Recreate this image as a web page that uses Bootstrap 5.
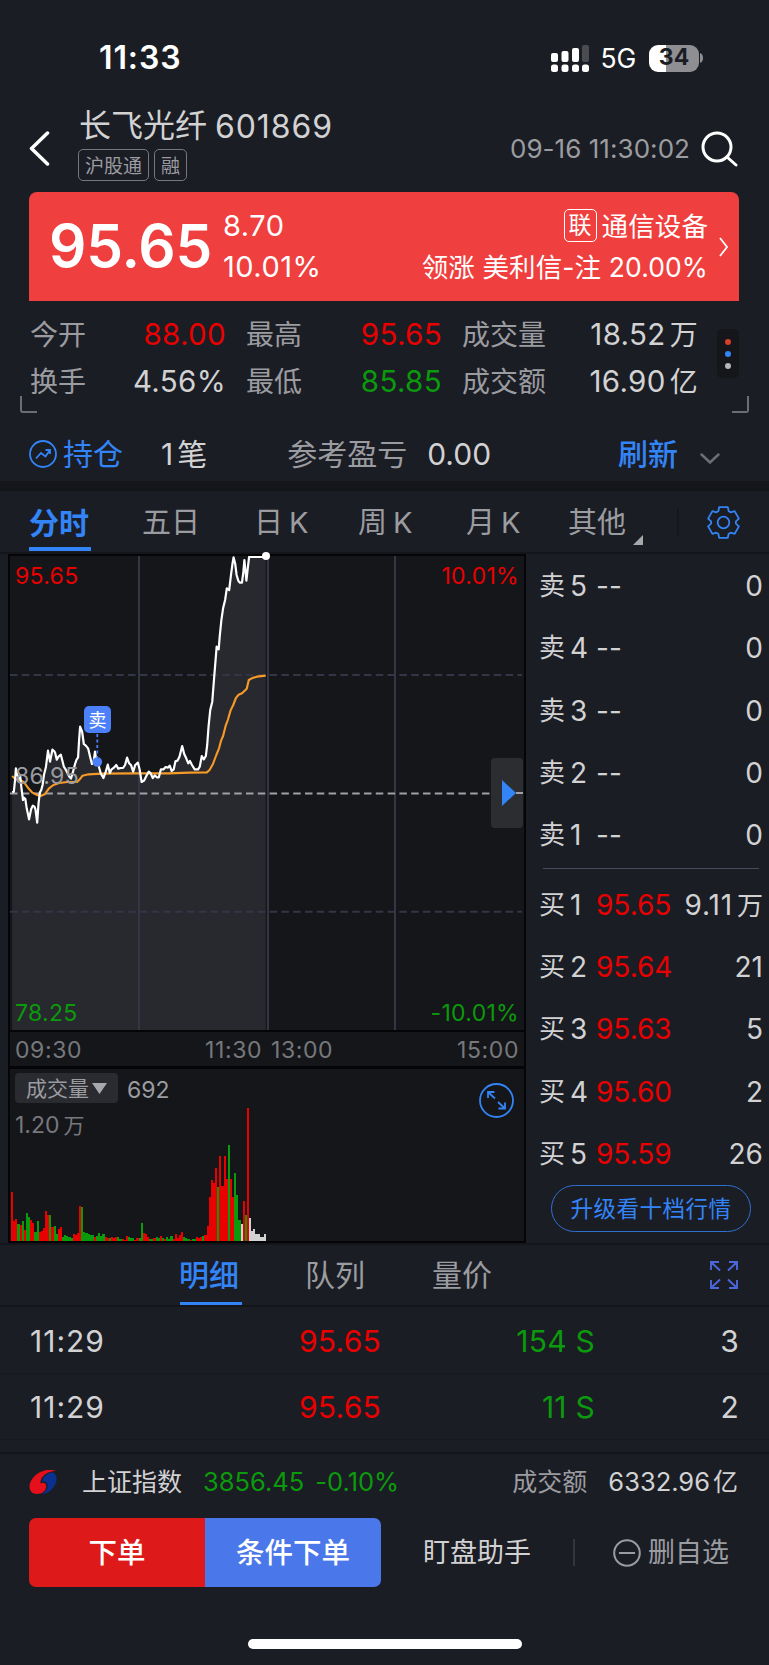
<!DOCTYPE html>
<html lang="zh-CN">
<head>
<meta charset="utf-8">
<meta name="viewport" content="width=device-width, initial-scale=1">
<title>长飞光纤 601869</title>
<link href="https://cdn.jsdelivr.net/npm/bootstrap@5.3.0/dist/css/bootstrap.min.css" rel="stylesheet">
<style>
:root{--bg:#1b1d25;--line:#14151a;--up:#e90000;--down:#0b9a0b;--blue:#3384f6;--txt:#d2d2d3;--dim:#9b9ca0}
body{background:var(--bg);color:var(--txt);font-family:Inter,"Noto Sans CJK SC",sans-serif;line-height:1;width:769px;height:1665px;overflow:hidden;font-feature-settings:"calt" 0}
svg{display:block;flex:none}
span,button,a{white-space:nowrap}
.up{color:var(--up)}.down{color:var(--down)}.blue{color:var(--blue)}.dim{color:var(--dim)}
.gut{padding-left:29px;padding-right:30px}
.status-bar{height:100px;padding:16px 66px 0 99px}
.clock{font-size:32px;font-weight:600;letter-spacing:.9px;color:#fff}
.net{font-size:26.5px;font-weight:400;margin-left:12px;letter-spacing:-.2px}
.battery{width:50px;height:27px;border-radius:9px;margin-left:13px;background:linear-gradient(90deg,#fff 35%,#8e8e93 35%);color:#1b1d25;font-size:23px;font-weight:700;padding-bottom:1px}
.head{height:92px}
.stock-name{font-size:32px;height:44px}
.tag{border:1.5px solid #77787c;border-radius:5px;height:32px;font-size:19px;color:var(--dim);padding:2px 6px 0}
.stamp{font-size:26px;color:var(--dim);letter-spacing:.05px}
.quote{margin:0 30px 0 29px;height:109px;background:#ef3f3e;border-radius:8px 8px 0 0;color:#fff;padding:0 10px 0 20px}
.last{font-size:58.5px;font-weight:600;width:174px;letter-spacing:-.2px}
.chg{font-size:29px;gap:12px;letter-spacing:.5px;margin-top:-2px}
.sector{gap:12px;font-size:26.5px;margin-right:11px;margin-top:-3px;letter-spacing:.1px}
.sector .lian{border:1.5px solid #fff;border-radius:5px;width:33px;height:33px;font-size:23px;margin-right:5px}
.stats{height:111px;padding:11px 30px 0 30px}
.stat-grid{display:grid;grid-template-columns:56px 140px 76px 140px 104px 152px;grid-template-rows:46px 47px;align-items:center;width:668px;height:93px}
.stat-grid .k{font-size:28px;color:var(--dim)}
.stat-grid .v{font-size:29.5px;text-align:right;letter-spacing:.35px}
.k2{padding-left:20px}
.cn{font-size:28px}
.more{width:22px;height:49px;background:#15161a;border-radius:5px;gap:6px;margin-top:17px}
.more i{width:6px;height:6px;border-radius:50%}
.corner{width:17px;height:17px;border:solid #6d6e72;border-width:0 0 2px 2px;border-radius:0 0 0 3px;top:396px;left:20px}
.corner.r{left:732px;border-width:0 2px 2px 0;border-radius:0 0 3px 0}
.hold{height:69px;font-size:30px;padding-top:15px;padding-bottom:0}
.hold span{flex:none}
.band{height:10px;background:#15161a;margin-top:0}
.ktabs{height:63px;font-size:29px;color:var(--dim);border-bottom:2px solid var(--line);display:grid;grid-template-columns:113px 112px 104px 108px 102px 109px 30px 30px;align-items:center}
.ktabs>*{height:61px;display:flex;align-items:center;position:relative;padding-top:2px}
.ktabs i{font-style:normal;margin-left:6px}
.on{color:var(--blue)}
.on::after{content:"";position:absolute;left:0;bottom:1px;width:62px;height:4px;background:var(--blue)}
.main{height:689px}
.chart-box{width:518px;margin-left:8px;background:#15161a;border:2px solid #050507;border-top-width:2px}
.plot{height:476px;border-bottom:2px solid #050507;font-size:23px}
.plot span{position:absolute;letter-spacing:.3px}
.axis{height:37px;border-bottom:3px solid #050507;font-size:23px;letter-spacing:.6px;color:#77787c;padding:2px 5px 0;display:grid;grid-template-columns:190px 66px 1fr auto;align-items:center}
.vol{height:172px;color:#77787c;font-size:23px}
.vsel{background:#292b30;border-radius:4px;width:103px;height:30px;color:var(--dim);font-size:21px;gap:3px}
.vtop{padding:4px 0 0 5px}
.bars{left:1px;bottom:0;height:134px;width:256px}
.bars i{width:2.13px;flex:none}
.play{left:481px;top:202px;width:32px;height:70px;border-radius:4px;background:#2c2d31}
.sellmark{left:74px;top:150px;width:27px;height:27px;border-radius:5px;background:#4b80fa;color:#fff;font-size:18px;padding-top:2px}
.book{width:243px;padding:1px 0 0 13px}
.lv{height:62.3px;display:grid;grid-template-columns:31px 26px 80px 1fr;align-items:center;font-size:28px;padding-right:6px}
.lv b{font-weight:400;font-size:26px}
.lv span:last-child{text-align:right;justify-self:end}
.sep{height:1px;background:#494b5a;margin:2px 10px 4px 4px}
.deep{width:200px;height:47px;margin:0 0 0 12px;border:1.5px solid #2f6fd0;border-radius:24px;color:var(--blue);font-size:22.5px;letter-spacing:.5px;background:none;padding:2px 0 0}
.dtabs{height:64px;border-bottom:2px solid var(--line);border-top:2px solid var(--line);font-size:30px;color:var(--dim);display:grid;grid-template-columns:150px 126px 127px 1fr auto;align-items:center;padding-right:31px}
.dtabs>*{height:60px;display:flex;align-items:center;position:relative}
.dtabs .on::after{bottom:0;height:3px;left:1px}
.tick{height:66.5px;border-bottom:1px solid #17181e;font-size:30px;letter-spacing:.25px;padding-top:2px;display:grid;grid-template-columns:170px 182px 214px 1fr;align-items:center;text-align:right}
.tick .text-start{letter-spacing:1px;padding-left:1px}
.index-row{height:60px;border-top:2px solid var(--line);font-size:25.5px;padding-bottom:2px}
.acts{padding-top:6px;height:75px}
.order{width:176px;height:69px;border:0;border-radius:7px 0 0 7px;background:#dd1a19;color:#fff;font-size:28.5px;font-weight:500;padding:2px 0 0}
.order.cond{background:#4a77e9;border-radius:0 7px 7px 0}
.home-bar{width:274px;height:10px;border-radius:5px;background:#fff;margin:52px auto 0 248px}
</style>
</head>
<body class="position-relative">
<header class="status-bar d-flex align-items-center">
  <span class="clock me-auto">11:33</span>
  <svg width="38" height="27" fill="#fff"><rect y="8" width="7" height="9" rx="2"/><rect x="10.5" y="6" width="7" height="11" rx="2"/><rect x="21" y="3" width="7" height="14" rx="2"/><rect x="31" width="7" height="17" rx="2" fill="#4b4c51"/><rect y="19.500" width="7" height="7.500" rx="2.500"/><rect x="10.500" y="19.500" width="7" height="7.500" rx="2.500"/><rect x="21" y="19.500" width="7" height="7.500" rx="2.500"/><rect x="31" y="19.500" width="7" height="7.500" rx="2.500"/></svg>
  <span class="net text-white">5G</span>
  <span class="battery d-flex align-items-center justify-content-center">34</span>
  <svg width="4" height="10" class="ms-0"><path d="M1 0Q4 1 4 5T1 10Z" fill="#8e8e93"/></svg>
</header>

<section class="head gut d-flex">
  <svg width="21" height="35" style="margin-top:31px" fill="none" stroke="#fff" stroke-width="3.500" stroke-linecap="round" stroke-linejoin="round"><path d="M18.500 2 2.500 17.500 18.500 33"/></svg>
  <div style="margin-left:29px;padding-top:4px">
    <div class="stock-name d-flex align-items-center"><span>长飞光纤</span><span style="margin-left:8px;letter-spacing:.9px;padding-top:2px">601869</span></div>
    <div class="d-flex" style="gap:5px;margin-top:1px;margin-left:-1px"><span class="tag d-flex align-items-center">沪股通</span><span class="tag d-flex align-items-center">融</span></div>
  </div>
  <div class="ms-auto d-flex align-items-center" style="height:98px"><span class="stamp">09-16 11:30:02</span>
    <svg width="37" height="36" style="margin:0 1px 0 11px" fill="none" stroke="#fff" stroke-width="3" stroke-linecap="round"><circle cx="16" cy="16" r="14"/><path d="M26 26 35 34"/></svg></div>
</section>

<section class="quote d-flex align-items-center">
  <span class="last">95.65</span>
  <div class="chg d-flex flex-column"><span>8.70</span><span>10.01%</span></div>
  <div class="sector d-flex flex-column align-items-end ms-auto">
    <div class="d-flex align-items-center"><span class="lian d-flex align-items-center justify-content-center">联</span>通信设备</div>
    <span>领涨 美利信-注 20.00%</span>
  </div>
  <svg width="9" height="20" fill="none" stroke="#fff" stroke-width="1.800" style="margin-right:1px"><path d="M1 1 8 10 1 19"/></svg>
</section>

<section class="stats d-flex">
  <div class="stat-grid">
    <span class="k">今开</span><span class="v up">88.00</span><span class="k k2">最高</span><span class="v up">95.65</span><span class="k k2">成交量</span><span class="v">18.52<span class="cn ms-1">万</span></span>
    <span class="k">换手</span><span class="v">4.56%</span><span class="k k2">最低</span><span class="v down">85.85</span><span class="k k2">成交额</span><span class="v">16.90<span class="cn ms-1">亿</span></span>
  </div>
  <div class="more d-flex flex-column align-items-center justify-content-center ms-auto"><i style="background:#d5402b"></i><i style="background:#3384f6"></i><i style="background:#b5b5b8"></i></div>
</section>
<i class="corner position-absolute"></i><i class="corner r position-absolute"></i>

<section class="hold gut d-flex align-items-center">
  <svg width="28" height="28" fill="none" stroke="#3384f6" stroke-width="1.800"><circle cx="14" cy="14" r="13"/><path d="M7 18.500 12 13l4.500 3.500L21 10M16.500 10h4.500v4"/></svg>
  <span class="blue" style="margin-left:6px">持仓</span>
  <span style="margin-left:38px">1</span><span style="margin-left:4px">笔</span>
  <span class="dim" style="margin-left:80px">参考盈亏</span>
  <span style="margin-left:20px">0.00</span>
  <span class="blue ms-auto fw-medium">刷新</span>
  <svg width="20" height="11" style="margin:8px 19px 0 22px" fill="none" stroke="#6d6e72" stroke-width="2.500" stroke-linecap="round"><path d="M1.500 1.500 10 9.500 18.500 1.500"/></svg>
</section>
<div class="band"></div>

<nav class="ktabs gut">
  <span class="on fw-bold" style="font-size:30px">分时</span><span>五日</span><span>日<i>K</i></span><span>周<i>K</i></span><span>月<i>K</i></span>
  <span>其他<svg width="10" height="10" style="margin:34px 0 0 7px"><path d="M10 0V10H0Z" fill="#a7a8ab"/></svg></span>
  <span><svg width="2" height="27"><path d="M1 0V27" stroke="#15161a" stroke-width="2"/></svg></span>
  <span><svg width="33" height="33" viewBox="-16.500 -16.500 33 33" fill="none" stroke="#3384f6" stroke-width="1.800" stroke-linejoin="round"><circle r="5.800"/><path d="M-5.200-11.300-4.300-15.300H4.300L5.200-11.300 7.200-10.200 11.100-11.400 15.400-3.900 12.400-1.200V1.200L15.400 3.900 11.100 11.400 7.200 10.200 5.200 11.300 4.300 15.300H-4.300L-5.200 11.300-7.200 10.200-11.100 11.400-15.400 3.900-12.400 1.200V-1.200L-15.400-3.900-11.100-11.400-7.200-10.200Z"/></svg></span>
</nav>

<section class="main d-flex">
  <div class="chart-box">
    <div class="plot position-relative">
      <svg width="514" height="474" viewBox="10 556 514 474">
        <g transform="translate(0 540) scale(.338 .33333)" fill="none" stroke-linejoin="round">
          <path id="fillArea" fill="#28292e"/>
        </g>
        <path d="M139 556V1030M268 556V1030M395 556V1030" stroke="#353645" stroke-width="2"/>
        <path d="M10 675H522M10 911.700H522" stroke="#353645" stroke-width="2" stroke-dasharray="7.500 4.300"/>
        <path d="M10 793.500H522" stroke="#a0a0a5" stroke-width="2" stroke-dasharray="7.500 4.300"/>
        <g transform="translate(0 540) scale(.338 .33333)" fill="none" stroke-linejoin="round">
          <polyline vector-effect="non-scaling-stroke" stroke="#f79a28" stroke-width="2.100" points="36,708 46,718 60,720 72,728 84,745 96,758 110,765 120,768 132,763 145,745 158,735 175,729 200,726 228,726 236,718 244,707 262,703 300,701 400,700 500,700 560,698 612,697 620,690 630,672 640,645 648,625 654,602 660,588 668,556 674,540 682,512 690,495 698,474 706,464 716,460 724,452 730,446 736,420 745,415 760,410 786,407"/>
          <polyline id="priceLine" vector-effect="non-scaling-stroke" stroke="#fff" stroke-width="2.200" points="36,757 41,755 45,715 47,685 51,705 56,715 60,710 63,740 68,780 71,773 75,777 79,805 86,838 92,808 97,797 102,800 105,808 110,848 114,790 118,757 122,750 126,735 130,705 136,680 142,632 148,665 155,629 160,633 163,638 168,659 173,650 180,644 184,660 189,680 194,688 200,700 205,710 210,716 216,695 222,672 226,660 231,652 234,600 237,560 243,575 248,612 254,617 261,626 266,648 272,672 277,665 281,635 285,660 288,668 292,678 298,700 306,714 313,695 319,674 325,699 330,688 337,683 344,675 350,686 357,684 364,684 370,675 376,653 382,670 388,676 394,695 400,675 408,668 413,688 419,726 426,722 434,706 440,695 446,700 452,714 458,706 464,712 470,712 476,688 484,688 490,681 497,683 502,677 508,693 514,688 519,664 525,662 531,650 539,618 545,642 551,655 557,670 562,663 568,675 576,688 586,688 591,680 597,648 603,658 609,648 613,615 617,560 622,510 628,485 633,420 637,370 641,320 647,328 650,290 655,240 660,205 666,180 671,145 678,150 684,100 688,70 691,52 696,72 700,105 705,122 710,128 716,128 720,95 723,60 729,122 733,85 737,51 786,51"/>
        </g>
        <path d="M97.300 734V757" stroke="#4b80fa" stroke-width="1.800" stroke-dasharray="3 2.500"/>
        <circle cx="97.300" cy="762" r="4.800" fill="#4b80fa"/>
      </svg>
      <i class="position-absolute rounded-circle bg-white" style="left:252px;top:-4px;width:8px;height:8px"></i>
      <span class="up" style="left:5px;top:9px">95.65</span>
      <span class="up" style="right:5px;top:9px">10.01%</span>
      <span class="dim" style="left:5px;top:209px">86.95</span>
      <span class="down" style="left:5px;bottom:5px">78.25</span>
      <span class="down" style="right:5px;bottom:5px">-10.01%</span>
      <div class="sellmark position-absolute d-flex align-items-center justify-content-center">卖</div>
      <div class="play position-absolute d-flex align-items-center"><svg width="32" height="26"><path d="M25 13H32" stroke="#a0a0a5" stroke-width="2"/><path d="M11 0 25 13 11 26Z" fill="#3384f6"/></svg></div>
    </div>
    <div class="axis"><span>09:30</span><span>11:30</span><span>13:00</span><span>15:00</span></div>
    <div class="vol position-relative">
      <div class="vtop d-flex align-items-center">
        <span class="vsel d-flex align-items-center justify-content-center">成交量<svg width="15" height="11"><path d="M0 0H15L7.500 11Z" fill="#a7a8ab"/></svg></span>
        <span class="dim" style="margin-left:9px;padding-top:4px">692</span>
        <svg width="35" height="35" class="ms-auto" style="margin:9px 10px -15px 0" fill="none" stroke="#3384f6" stroke-width="1.800"><circle cx="17.500" cy="17.500" r="16.500"/><path d="M16 15.500 9 9M9 15V9H15.500M19 19 26 25.500M26 19.500V25.500H19.500"/></svg>
      </div>
      <div style="padding:11px 0 0 5px">1.20<span style="font-size:21px;margin-left:4px">万</span></div>
      <div class="bars position-absolute d-flex align-items-end" id="bars"></div>
    </div>
  </div>
  <div class="book">
    <div class="lv"><b>卖</b><span>5</span><span>--</span><span>0</span></div>
    <div class="lv"><b>卖</b><span>4</span><span>--</span><span>0</span></div>
    <div class="lv"><b>卖</b><span>3</span><span>--</span><span>0</span></div>
    <div class="lv"><b>卖</b><span>2</span><span>--</span><span>0</span></div>
    <div class="lv"><b>卖</b><span>1</span><span>--</span><span>0</span></div>
    <div class="sep"></div>
    <div class="lv"><b>买</b><span>1</span><span class="up">95.65</span><span style="letter-spacing:.9px;margin-right:-1px">9.11<b class="ms-1">万</b></span></div>
    <div class="lv"><b>买</b><span>2</span><span class="up">95.64</span><span>21</span></div>
    <div class="lv"><b>买</b><span>3</span><span class="up">95.63</span><span>5</span></div>
    <div class="lv"><b>买</b><span>4</span><span class="up">95.60</span><span>2</span></div>
    <div class="lv"><b>买</b><span>5</span><span class="up">95.59</span><span>26</span></div>
    <button class="deep d-flex align-items-center justify-content-center">升级看十档行情</button>
  </div>
</section>

<nav class="dtabs gut">
  <span></span><span class="on fw-medium">明细</span><span>队列</span><span>量价</span>
  <span><svg width="28" height="28" fill="none" stroke="#4c67dc" stroke-width="1.900"><path d="M10 9.500 1 1M1 9V1H9M18 9.500 27 1M27 9V1H19M10 18.500 1 27M1 19V27H9M18 18.500 27 27M27 19V27H19"/></svg></span>
</nav>
<div class="tick gut"><span class="text-start">11:29</span><span class="up">95.65</span><span class="down">154 S</span><span>3</span></div>
<div class="tick gut"><span class="text-start">11:29</span><span class="up">95.65</span><span class="down">11 S</span><span>2</span></div>
<div style="height:12px"></div>
<section class="index-row gut d-flex align-items-center">
  <svg width="28" height="25" viewBox="0 0 28 25"><path d="M27 1C20-2 9 1 4 8-2 15 0 24 8 24 14 24 18 20 17 15 16.500 12.500 13 12 11.500 13.500 11 7 18 1 27 1Z" fill="#e60f1c"/><path d="M24 2.500C29 5 28.500 13 24 18 20.500 22 16 24 13 24 18 21 19.500 17 18 13.500 17 11.500 14.500 11 13 12 14 6 19 2.500 24 2.500Z" fill="#0b3190"/></svg>
  <span style="margin-left:25px;font-size:25px">上证指数</span>
  <span class="down" style="margin-left:21px">3856.45</span>
  <span class="down" style="margin-left:11px">-0.10%</span>
  <span class="dim ms-auto" style="font-size:25px">成交额</span>
  <span style="margin:0 1px 0 21px">6332.96<span style="font-size:25px;margin-left:3px">亿</span></span>
</section>
<section class="acts gut d-flex align-items-center">
  <button class="order">下单</button><button class="order cond">条件下单</button>
  <span style="margin-left:42px;font-size:27px">盯盘助手</span>
  <svg width="2" height="27" style="margin-left:42px"><path d="M1 0V27" stroke="#33353f" stroke-width="2"/></svg>
  <svg width="28" height="28" style="margin-left:38px" fill="none" stroke="#9b9ca0" stroke-width="2"><circle cx="14" cy="14" r="12.800"/><path d="M6 14H22"/></svg>
  <span class="dim" style="margin-left:7px;font-size:27px">删自选</span>
</section>
<div class="home-bar"></div>

<script>
// area under the price line, closed down to the plot floor
var line = document.getElementById('priceLine').getAttribute('points');
document.getElementById('fillArea').setAttribute('d', 'M' + line + ' 786,1470 36,1470Z');
// per-minute volume: r = rise, g = fall, w = flat
var vol = 'r146 r60 r67 g52 r47 g60 r32 g83 g71 r63 r53 g28 g60 r27 r31 r38 r89 r79 g79 r42 g46 g20 r37 r42 g11 g19 g14 g13 g10 r21 r17 r24 r105 g103 g26 g24 g22 g19 g18 r12 g15 g23 g16 g20 r12 r9 g8 r12 r8 r12 g12 g7 r6 r4 r15 g11 g8 g10 r4 r9 g8 g54 r24 r21 r11 g6 g5 r10 g12 g8 r15 g8 r6 g11 g5 g16 r5 r21 r8 r19 r26 g12 g10 g6 r3 g5 g5 r13 r8 r12 g14 r17 r45 r131 r184 r173 r218 g162 r255 r166 r254 r185 g289 r187 r133 g203 g137 g62 w50 r119 g77 r400 w68 w29 w37 w21 w21 w11 w13 w22';
var tone = {r: '#e90000', g: '#0b9a0b', w: '#d2d2d3'};
document.getElementById('bars').innerHTML = vol.split(' ').map(function (v) {
  return '<i style="height:' + (v.slice(1) / 3).toFixed(1) + 'px;background:' + tone[v[0]] + '"></i>';
}).join('');
</script>
<script src="https://cdn.jsdelivr.net/npm/bootstrap@5.3.0/dist/js/bootstrap.bundle.min.js"></script>
</body>
</html>
